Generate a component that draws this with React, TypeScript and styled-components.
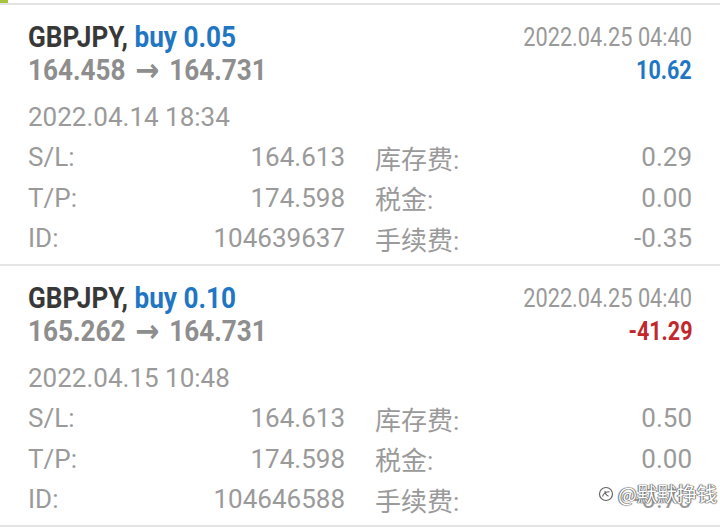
import React from "react";
import styled, { createGlobalStyle } from "styled-components";

const GlobalStyle = createGlobalStyle`
  html, body { margin: 0; padding: 0; background: #ffffff; }
  body { font-family: Roboto, "Noto Sans CJK SC", sans-serif; }
  * { box-sizing: border-box; }
`;

const Page = styled.div`
  position: relative;
  width: 720px;
  height: 530px;
  overflow: hidden;
  background: #ffffff;
`;

const TopEdge = styled.div`
  height: 3px;
  display: flex;
`;

const GreenMark = styled.div`
  width: 8px;
  height: 3px;
  background: #a9c23f;
`;

const Divider = styled.div`
  height: 2px;
  background: #e4e4e4;
`;

const Card = styled.div`
  height: 259px;
  padding: 16px 28px 0 28px;
  display: flex;
  flex-direction: column;
`;

const Header = styled.div`
  display: flex;
  justify-content: space-between;
`;

const HeaderCol = styled.div<{ $align: "left" | "right" }>`
  display: flex;
  flex-direction: column;
  align-items: ${(p) => (p.$align === "left" ? "flex-start" : "flex-end")};
`;

const Condensed = styled.div<{
  $size: number;
  $weight: number;
  $color: string;
  $scale: number;
  $origin: "left" | "right";
}>`
  display: inline-block;
  white-space: nowrap;
  font-family: Roboto, sans-serif;
  font-size: ${(p) => p.$size}px;
  font-weight: ${(p) => p.$weight};
  color: ${(p) => p.$color};
  line-height: 33px;
  height: 33px;
  transform: scaleX(${(p) => p.$scale});
  transform-origin: ${(p) => p.$origin} center;
`;

const Symbol = styled.span`
  color: #383838;
`;

const Side = styled.span`
  color: #1f77c4;
`;

const Arrow = styled.span`
  display: inline-block;
  margin: 0 11px 0 11px;
  font-family: "DejaVu Sans", sans-serif;
  font-weight: 700;
  font-size: 32px;
  line-height: 33px;
  vertical-align: top;
`;

const OpenTime = styled.div`
  margin-top: 10px;
  font-size: 26px;
  line-height: 40px;
  color: #9a9a9a;
`;

const Grid = styled.div`
  display: grid;
  grid-template-columns: 1fr 1fr;
  column-gap: 30px;
`;

const Field = styled.div`
  display: flex;
  justify-content: space-between;
  align-items: center;
  height: 40.5px;
  font-size: 26px;
  color: #9a9a9a;
  white-space: nowrap;
`;

const Label = styled.span`
  font-family: Roboto, "Noto Sans CJK SC", sans-serif;
`;

const Value = styled.span``;

const Watermark = styled.div`
  position: absolute;
  left: 598px;
  top: 482px;
  display: flex;
  align-items: center;
  gap: 4px;
  white-space: nowrap;
  font-family: "Noto Sans CJK SC", sans-serif;
  font-size: 20px;
  line-height: 24px;
  color: #ffffff;
  text-shadow: 0 0 1px #555, 0 0 1px #555, 1px 0 1px #888, -1px 0 1px #888;
`;

type Trade = {
  side: string;
  open: string;
  close: string;
  closeTime: string;
  profit: string;
  positive: boolean;
  openTime: string;
  sl: string;
  tp: string;
  id: string;
  swap: string;
  tax: string;
  fee: string;
};

const trades: Trade[] = [
  {
    side: "buy 0.05",
    open: "164.458",
    close: "164.731",
    closeTime: "2022.04.25 04:40",
    profit: "10.62",
    positive: true,
    openTime: "2022.04.14 18:34",
    sl: "164.613",
    tp: "174.598",
    id: "104639637",
    swap: "0.29",
    tax: "0.00",
    fee: "-0.35",
  },
  {
    side: "buy 0.10",
    open: "165.262",
    close: "164.731",
    closeTime: "2022.04.25 04:40",
    profit: "-41.29",
    positive: false,
    openTime: "2022.04.15 10:48",
    sl: "164.613",
    tp: "174.598",
    id: "104646588",
    swap: "0.50",
    tax: "0.00",
    fee: "-0.70",
  },
];

const TradeCard = ({ t }: { t: Trade }) => (
  <Card>
    <Header>
      <HeaderCol $align="left">
        <Condensed $size={29} $weight={700} $color="#383838" $scale={0.9} $origin="left">
          <Symbol>GBPJPY,</Symbol> <Side>{t.side}</Side>
        </Condensed>
        <Condensed $size={29} $weight={700} $color="#8e8e8e" $scale={0.9} $origin="left">
          {t.open}
          <Arrow>→</Arrow>
          {t.close}
        </Condensed>
      </HeaderCol>
      <HeaderCol $align="right">
        <Condensed $size={25} $weight={400} $color="#999999" $scale={0.87} $origin="right">
          {t.closeTime}
        </Condensed>
        <Condensed
          $size={25}
          $weight={700}
          $color={t.positive ? "#1f77c4" : "#c1272d"}
          $scale={0.86}
          $origin="right"
        >
          {t.profit}
        </Condensed>
      </HeaderCol>
    </Header>
    <OpenTime>{t.openTime}</OpenTime>
    <Grid>
      <Field>
        <Label>S/L:</Label>
        <Value>{t.sl}</Value>
      </Field>
      <Field>
        <Label>库存费:</Label>
        <Value>{t.swap}</Value>
      </Field>
      <Field>
        <Label>T/P:</Label>
        <Value>{t.tp}</Value>
      </Field>
      <Field>
        <Label>税金:</Label>
        <Value>{t.tax}</Value>
      </Field>
      <Field>
        <Label>ID:</Label>
        <Value>{t.id}</Value>
      </Field>
      <Field>
        <Label>手续费:</Label>
        <Value>{t.fee}</Value>
      </Field>
    </Grid>
  </Card>
);

const WatermarkIcon = () => (
  <svg width="16" height="16" viewBox="0 0 16 16">
    <circle cx="8" cy="8" r="6.5" fill="#fff" stroke="#666" strokeWidth="1.2" />
    <path d="M4.5 10.5c1-3.5 3.5-4.8 7-4.8M7 5c0 2.4 1.2 4.2 3.6 5.2" fill="none" stroke="#666" strokeWidth="1.1" />
  </svg>
);

export default function App() {
  return (
    <Page>
      <GlobalStyle />
      <TopEdge>
        <GreenMark />
      </TopEdge>
      <Divider />
      {trades.map((t, i) => (
        <React.Fragment key={i}>
          <TradeCard t={t} />
          <Divider />
        </React.Fragment>
      ))}
      <Watermark>
        <WatermarkIcon />
        <span>@默默挣钱</span>
      </Watermark>
    </Page>
  );
}
